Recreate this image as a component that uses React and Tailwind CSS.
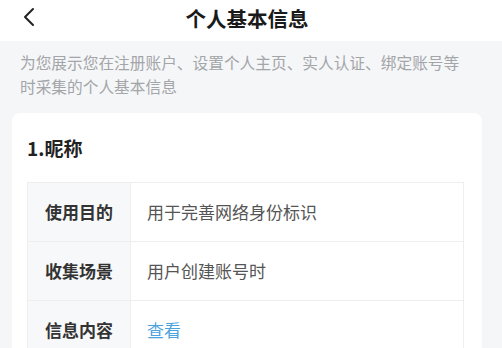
export default function App() {
  const rows = [
    { label: "使用目的", value: "用于完善网络身份标识" },
    { label: "收集场景", value: "用户创建账号时" },
    { label: "信息内容", value: "查看", link: true },
  ];

  return (
    <div
      className="w-[502px] h-[348px] overflow-hidden bg-[#f5f6f8]"
      style={{ fontFamily: "'Noto Sans CJK SC', 'Noto Sans', sans-serif" }}
    >
      {/* 顶部导航 */}
      <div className="relative h-[41px] bg-white flex items-center justify-center">
        <svg
          className="absolute left-[20px] top-[7px]"
          width="18"
          height="20"
          viewBox="0 0 18 20"
          fill="none"
        >
          <path
            d="M13 2 L5 10 L13 18"
            stroke="#222"
            strokeWidth="2"
            strokeLinecap="round"
            strokeLinejoin="round"
          />
        </svg>
        <h1 className="text-[20.5px] leading-[28px] font-bold text-[#1a1a1a] -mt-[6px] -ml-[8px]">
          个人基本信息
        </h1>
      </div>

      {/* 说明 */}
      <p className="ml-[20px] w-[446px] pt-[10px] text-[15.7px] leading-[24px] text-[#a3a5a8]">
        为您展示您在注册账户、设置个人主页、实人认证、绑定账号等时采集的个人基本信息
      </p>

      {/* 卡片 */}
      <div className="mt-[14px] ml-[12px] w-[470px] bg-white rounded-[8px] pt-[20px] pl-[15px] pr-[18px] pb-4">
        <h2 className="text-[19px] leading-[30px] font-bold text-[#222]">1.昵称</h2>
        <div className="mt-[19px] border border-[#eeeeee]">
          {rows.map((r, i) => (
            <div
              key={r.label}
              className={
                i === 0
                  ? "flex h-[58px]"
                  : "flex h-[59px] border-t border-[#eeeeee]"
              }
            >
              <div className="w-[103px] shrink-0 bg-[#f7f8fa] border-r border-[#eeeeee] flex items-center pl-[17px] text-[17px] font-semibold text-[#333]">
                {r.label}
              </div>
              <div
                className={
                  r.link
                    ? "flex-1 flex items-center pl-[16px] text-[17px] text-[#4aa3de]"
                    : "flex-1 flex items-center pl-[16px] text-[17px] text-[#555]"
                }
              >
                {r.value}
              </div>
            </div>
          ))}
        </div>
      </div>
    </div>
  );
}
